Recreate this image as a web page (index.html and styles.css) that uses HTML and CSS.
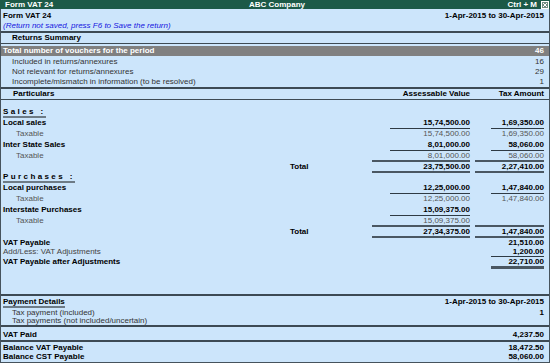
FILE: index.html
```html
<!DOCTYPE html>
<html lang="en">
<head>
    <meta charset="UTF-8">
    <meta name="viewport" content="width=device-width, initial-scale=1.0">
    <title>Form VAT 24</title>
    <link rel="stylesheet" href="styles.css">
</head>
<body>
    <div class="window">
        <div class="titlebar">
            <span>Form VAT 24</span>
            <span class="tb-center">ABC Company</span>
            <span class="tb-right">
                Ctrl + M
                <svg class="close-box" viewBox="0 0 8 8" width="8" height="8">
                    <rect x="0.5" y="0.5" width="7" height="7" fill="#6f8c83" stroke="#ffffff"/>
                    <path d="M2 2 L6 6 M6 2 L2 6" stroke="#ffffff" stroke-width="1"/>
                </svg>
            </span>
        </div>

        <div class="content">
            <div class="report-head">
                <div class="head-row">
                    <span>Form VAT 24</span>
                    <span>1-Apr-2015 to 30-Apr-2015</span>
                </div>
                <div class="note">(Return not saved, press F6 to Save the return)</div>
            </div>

            <div class="section-title">Returns Summary</div>

            <div class="band">
                <span>Total number of vouchers for the period</span>
                <span>46</span>
            </div>
            <div class="count-row"><span>Included in returns/annexures</span><span>16</span></div>
            <div class="count-row"><span>Not relevant for returns/annexures</span><span>29</span></div>
            <div class="count-row"><span>Incomplete/mismatch in information (to be resolved)</span><span>1</span></div>

            <div class="row col-head">
                <span class="lbl">Particulars</span>
                <span class="amt">Assessable Value</span>
                <span class="amt">Tax Amount</span>
            </div>

            <div class="main">
                <div class="grp-head first"><span>Sales :</span></div>
                <div class="row item">
                    <span>Local sales</span>
                    <span class="amt"><span class="u-av">15,74,500.00</span></span>
                    <span class="amt"><span class="u-tx">1,69,350.00</span></span>
                </div>
                <div class="row sub">
                    <span class="lbl">Taxable</span>
                    <span class="amt">15,74,500.00</span>
                    <span class="amt">1,69,350.00</span>
                </div>
                <div class="row item">
                    <span>Inter State Sales</span>
                    <span class="amt"><span class="u-av">8,01,000.00</span></span>
                    <span class="amt"><span class="u-tx">58,060.00</span></span>
                </div>
                <div class="row sub">
                    <span class="lbl">Taxable</span>
                    <span class="amt">8,01,000.00</span>
                    <span class="amt">58,060.00</span>
                </div>
                <div class="row total">
                    <span class="lbl">Total</span>
                    <span class="amt">23,75,500.00</span>
                    <span class="amt">2,27,410.00</span>
                </div>

                <div class="grp-head"><span>Purchases :</span></div>
                <div class="row item">
                    <span>Local purchases</span>
                    <span class="amt"><span class="u-av">12,25,000.00</span></span>
                    <span class="amt"><span class="u-tx">1,47,840.00</span></span>
                </div>
                <div class="row sub">
                    <span class="lbl">Taxable</span>
                    <span class="amt">12,25,000.00</span>
                    <span class="amt">1,47,840.00</span>
                </div>
                <div class="row item">
                    <span>Interstate Purchases</span>
                    <span class="amt"><span class="u-av">15,09,375.00</span></span>
                    <span class="amt"></span>
                </div>
                <div class="row sub">
                    <span class="lbl">Taxable</span>
                    <span class="amt">15,09,375.00</span>
                    <span class="amt"></span>
                </div>
                <div class="row total">
                    <span class="lbl">Total</span>
                    <span class="amt">27,34,375.00</span>
                    <span class="amt">1,47,840.00</span>
                </div>

                <div class="row vat">
                    <span>VAT Payable</span>
                    <span></span>
                    <span class="amt">21,510.00</span>
                </div>
                <div class="row vat plain">
                    <span>Add/Less: VAT Adjustments</span>
                    <span></span>
                    <span class="amt"><span class="u-tx">1,200.00</span></span>
                </div>
                <div class="row vat">
                    <span>VAT Payable after Adjustments</span>
                    <span></span>
                    <span class="amt"><span class="u-tx thick">22,710.00</span></span>
                </div>
            </div>

            <div class="footer">
                <div class="pay-head">
                    <span class="pay-title">Payment Details</span>
                    <span>1-Apr-2015 to 30-Apr-2015</span>
                </div>
                <div class="pay-row"><span>Tax payment (included)</span><b>1</b></div>
                <div class="pay-row pay-last"><span>Tax payments (not included/uncertain)</span><b></b></div>
                <div class="paid-row"><span>VAT Paid</span><span>4,237.50</span></div>
                <div class="balance">
                    <div class="bal-row"><span>Balance VAT Payable</span><span>18,472.50</span></div>
                    <div class="bal-row"><span>Balance CST Payable</span><span>58,060.00</span></div>
                </div>
            </div>
        </div>
    </div>
</body>
</html>
```

FILE: styles.css
```css
* {
    box-sizing: border-box;
}
body {
    margin: 0;
    font-family: "Liberation Sans", Arial, sans-serif;
    font-size: 8px;
    color: #111;
    background-color: #cce5fb;
}
.window {
    width: 550px;
    height: 363px;
    display: flex;
    flex-direction: column;
}
.titlebar {
    height: 9px;
    line-height: 9px;
    background-color: #1c5a48;
    color: #fff;
    font-weight: bold;
    display: grid;
    grid-template-columns: 1fr auto 1fr;
    align-items: center;
    padding: 0 1px 0 5px;
}
.tb-center {
    text-align: center;
}
.tb-right {
    display: flex;
    justify-content: flex-end;
    align-items: center;
    gap: 4px;
}
.close-box {
    display: block;
}
.content {
    flex: 1;
    display: flex;
    flex-direction: column;
    border: 1px solid #46535d;
    border-top: 0;
}
.report-head {
    padding: 2px 5px 0 2px;
}
.head-row {
    display: flex;
    justify-content: space-between;
    font-weight: bold;
    line-height: 10px;
    color: #000;
}
.note {
    color: #1515e0;
    font-style: italic;
    line-height: 10px;
}
.section-title {
    border-top: 2px solid #3d4a54;
    border-bottom: 1px solid #3d4a54;
    line-height: 10px;
    padding-left: 11px;
    font-weight: bold;
    color: #000;
    margin-bottom: 2px;
}
.band {
    display: flex;
    justify-content: space-between;
    background-color: #808080;
    color: #fff;
    font-weight: bold;
    line-height: 10px;
    padding: 0 5px 0 2px;
    margin-bottom: 1px;
}
.count-row {
    display: flex;
    justify-content: space-between;
    line-height: 10px;
    padding: 0 5px 0 11px;
    color: #333;
}
.row {
    display: grid;
    grid-template-columns: 1fr 98px 69px;
    column-gap: 5px;
    padding: 0 5px 0 2px;
    line-height: 10px;
}
.amt {
    text-align: right;
}
.col-head {
    border-top: 2px solid #3d4a54;
    border-bottom: 1px solid #3d4a54;
    font-weight: bold;
    color: #000;
}
.col-head .lbl {
    padding-left: 10px;
}
.main {
    flex: 1;
}
.grp-head {
    padding-left: 2px;
    line-height: 8px;
    font-weight: bold;
    color: #000;
    letter-spacing: 2.4px;
}
.grp-head.first {
    margin-top: 8px;
}
.grp-head span {
    display: inline-block;
    border-bottom: 2px solid #6d7b86;
}
.item {
    font-weight: bold;
    color: #000;
}
.item + .sub + .item {
    margin-top: 1px;
}
.u-av,
.u-tx {
    display: inline-block;
    border-bottom: 1px solid #2e3a44;
}
.u-av {
    width: 80px;
}
.u-tx {
    width: 53px;
}
.u-tx.thick {
    border-bottom: 3px solid #4a5762;
}
.sub {
    color: #555;
}
.sub .lbl {
    padding-left: 13px;
}
.total {
    font-weight: bold;
    color: #000;
    align-items: center;
    line-height: 9px;
    margin-top: -1px;
}
.total .lbl {
    padding-left: 287px;
}
.total .amt {
    border-top: 2px solid #4a5762;
    border-bottom: 2px solid #4a5762;
}
.vat {
    font-weight: bold;
    color: #000;
    line-height: 9px;
}
.vat.plain {
    font-weight: normal;
    color: #444;
}
.vat.plain .amt {
    font-weight: bold;
    color: #000;
}
.footer {
    border-top: 2px solid #3d4a54;
    padding-top: 2px;
}
.pay-head {
    display: flex;
    justify-content: space-between;
    align-items: flex-start;
    padding: 0 5px 0 2px;
    font-weight: bold;
    color: #000;
    height: 10px;
    line-height: 8px;
}
.pay-title {
    border-bottom: 2px solid #6d7b86;
}
.pay-row {
    display: flex;
    justify-content: space-between;
    padding: 0 5px 0 11px;
    line-height: 9px;
    color: #333;
}
.pay-row.pay-last {
    line-height: 8px;
}
.pay-row b {
    color: #000;
}
.paid-row {
    display: flex;
    justify-content: space-between;
    border-top: 2px solid #3d4a54;
    border-bottom: 2px solid #3d4a54;
    padding: 3px 5px 0 2px;
    line-height: 10px;
    font-weight: bold;
    color: #000;
}
.balance {
    padding: 1px 5px 1px 2px;
    font-weight: bold;
    color: #000;
}
.bal-row {
    display: flex;
    justify-content: space-between;
    line-height: 9px;
}
```
